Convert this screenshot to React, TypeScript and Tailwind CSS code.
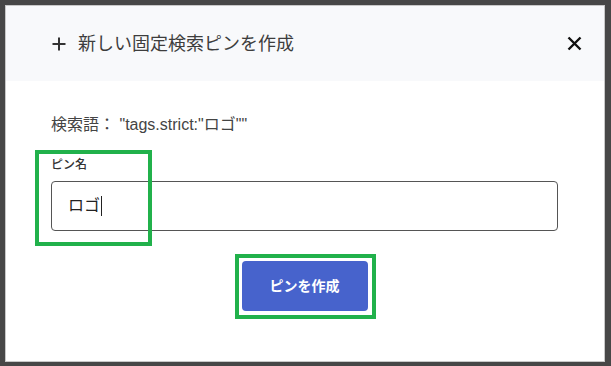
import React from "react";

export default function App() {
  return (
    <div
      className="w-[611px] h-[366px] bg-[#474747] pt-[5px] pl-[5px]"
      style={{ fontFamily: 'Roboto, "Noto Sans CJK JP", sans-serif' }}
    >
      <div className="relative w-[600px] h-[357px] bg-white border border-[#c8c8c8]">
        {/* header */}
        <div className="h-[75px] bg-[#f8f9fb] flex items-center pl-[46px] pr-[22px]">
          <svg width="14" height="14" viewBox="0 0 14 14" className="mr-[12px]">
            <path d="M7 0.5V13.5M0.5 7H13.5" stroke="#333" strokeWidth="2" />
          </svg>
          <div className="text-[18px] text-[#3d3d3d] leading-none">新しい固定検索ピンを作成</div>
          <div className="flex-1" />
          <svg width="15" height="15" viewBox="0 0 15 15">
            <path d="M1.5 1.5L13.5 13.5M13.5 1.5L1.5 13.5" stroke="#111" strokeWidth="2.4" />
          </svg>
        </div>
        {/* body */}
        <div className="pl-[45px] pr-[46px] pt-[34px]">
          <div
            className="text-[16px] text-[#444] leading-[20px]"
            style={{ fontFamily: '"Liberation Sans", "Noto Sans CJK JP", sans-serif' }}
          >
            検索語： "tags.strict:"ロゴ""
          </div>
          <div className="mt-[22px] text-[12px] text-[#333] leading-[16px] font-medium">ピン名</div>
          <div className="mt-[8px] h-[50px] w-[507px] border border-[#555] rounded-[4px] flex items-center pl-[16px]">
            <span className="text-[16px] text-[#222]">ロゴ</span>
            <span className="ml-[1px] w-[1px] h-[20px] bg-[#222]" />
          </div>
          <div className="w-[507px] flex justify-center mt-[30px]">
            <div className="w-[126px] h-[50px] rounded-[4px] bg-[#4763cc] flex items-center justify-center text-white text-[14px] font-semibold">
              ピンを作成
            </div>
          </div>
        </div>
        {/* annotation boxes */}
        <div className="absolute left-[29px] top-[144px] w-[117px] h-[96px] border-[4px] border-[#21b14b]" />
        <div className="absolute left-[229px] top-[248px] w-[141px] h-[65px] border-[4px] border-[#21b14b]" />
      </div>
    </div>
  );
}
